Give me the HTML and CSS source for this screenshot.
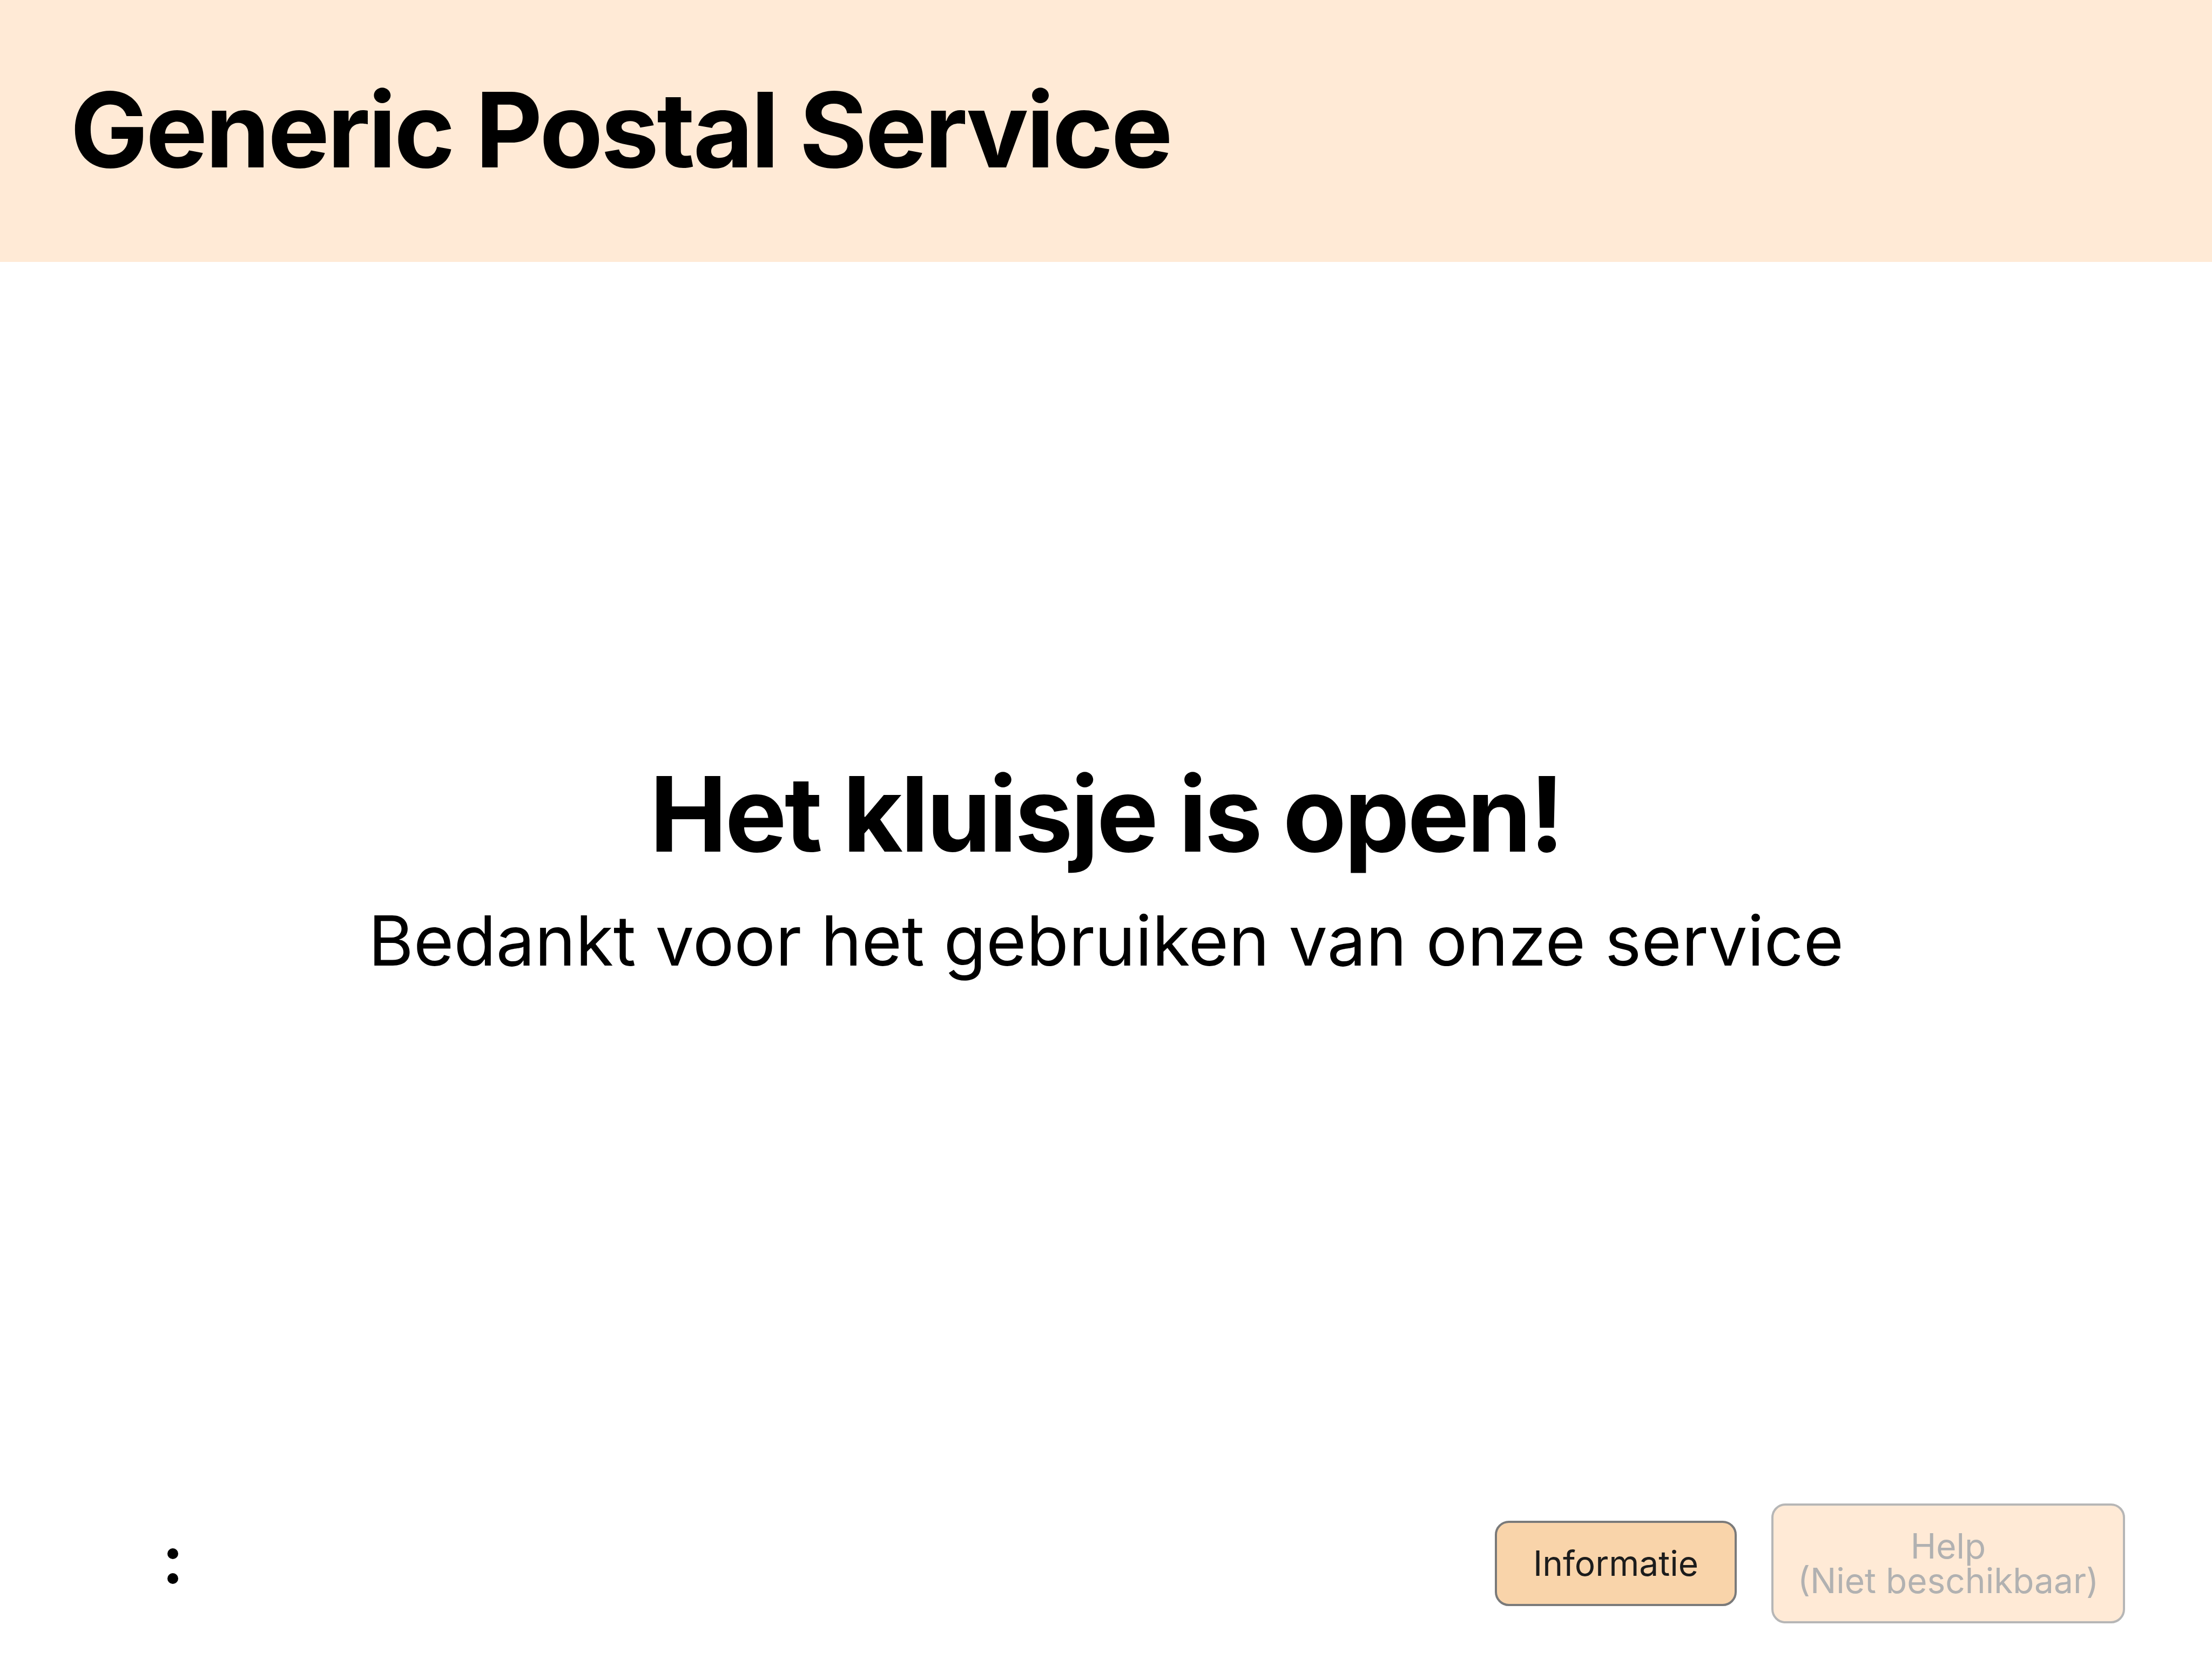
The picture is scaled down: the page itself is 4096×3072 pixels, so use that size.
FILE: index.html
```html
<!DOCTYPE html>
<html lang="nl">
<head>
<meta charset="utf-8">
<title>Generic Postal Service</title>
<link rel="stylesheet" href="styles.css">
</head>
<body>
<div class="page">
  <header class="header">
    <h1 class="brand">Generic Postal Service</h1>
  </header>
  <main class="main">
    <h2 class="headline">Het kluisje is open!</h2>
    <p class="subline">Bedankt voor het gebruiken van onze service</p>
  </main>
  <footer class="footer">
    <svg class="dots" width="20" height="66" viewBox="0 0 20 66" aria-hidden="true">
      <circle cx="10" cy="10" r="10" fill="#000"/>
      <circle cx="10" cy="56" r="10" fill="#000"/>
    </svg>
    <div class="actions">
      <button class="btn btn-info" type="button">Informatie</button>
      <button class="btn btn-help" type="button" disabled>Help<br>(Niet beschikbaar)</button>
    </div>
  </footer>
</div>
</body>
</html>
```
FILE: styles.css
```css
html, body {
  margin: 0;
  padding: 0;
  background: #ffffff;
}

body {
  font-family: Inter, "Noto Sans", sans-serif;
  color: #000;
}

.page {
  display: flex;
  flex-direction: column;
  height: 100vh;
}

.header {
  background: #ffead6;
  height: 485px;
  box-sizing: border-box;
  padding: 144px 0 0 130px;
}

.brand {
  margin: 0;
  font-size: 192px;
  line-height: 1;
  font-weight: 700;
  letter-spacing: -0.021em;
}

.main {
  flex: 1;
  display: flex;
  flex-direction: column;
  align-items: center;
  justify-content: center;
  padding-bottom: 52px;
  gap: 75px;
}

.headline {
  margin: 0;
  font-size: 192px;
  line-height: 1;
  font-weight: 700;
  letter-spacing: -0.021em;
}

.subline {
  margin: 0;
  font-size: 128px;
  line-height: 1;
  font-weight: 400;
  letter-spacing: -0.001em;
}

.footer {
  display: flex;
  align-items: center;
  justify-content: space-between;
  padding: 0 161px 66px 310px;
}

.dots {
  display: block;
  margin-top: 10px;
}

.actions {
  display: flex;
  align-items: center;
  gap: 64px;
}

.btn {
  font-family: Inter, "Noto Sans", sans-serif;
  font-size: 64px;
  line-height: 64px;
  border-width: 4px;
  border-style: solid;
  border-radius: 26px;
  box-sizing: border-box;
  padding: 43px 0;
  text-align: center;
  margin: 0;
}

.btn-info {
  width: 448px;
  background: #f9d4aa;
  border-color: #7a7a7a;
  color: #1c1c1c;
}

.btn-help {
  width: 655px;
  background: #ffead6;
  border-color: #b6b6b6;
  color: #b1b1b1;
}
```
